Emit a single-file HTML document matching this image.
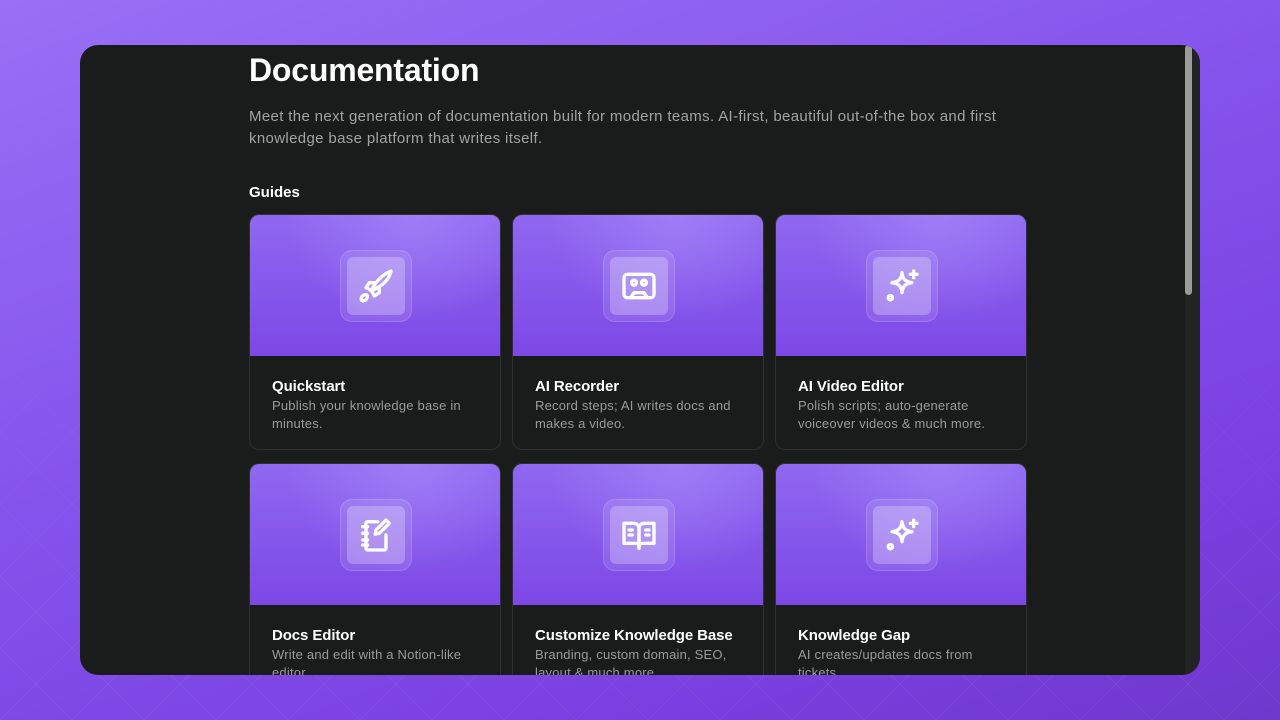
<!DOCTYPE html>
<html><head><style>
*{margin:0;padding:0;box-sizing:border-box}
body{width:1280px;height:720px;overflow:hidden;font-family:"Liberation Sans",sans-serif;background:linear-gradient(160deg,#9a70f5 0%,#8452ec 45%,#7a3fe0 80%,#6e38cc 100%);position:relative}
.pat{position:absolute;inset:0;background-image:linear-gradient(45deg,transparent 49%,rgba(255,255,255,.06) 50%,transparent 51%),linear-gradient(-45deg,transparent 49%,rgba(255,255,255,.06) 50%,transparent 51%);background-size:72px 72px;-webkit-mask-image:linear-gradient(180deg,transparent 40%,#000 85%)}
.win{position:absolute;left:80px;top:45px;width:1120px;height:630px;background:#1a1c1c;border-radius:18px;overflow:hidden}
.sb{position:absolute;right:8px;top:0;width:7px;height:250px;background:#9a9a9a;border-radius:4px}
.sbt{position:absolute;right:0;top:0;width:15px;height:100%;background:#222424}
h1{position:absolute;left:169px;top:7px;font-size:32px;color:#fff;font-weight:700;letter-spacing:-.2px}
.p{position:absolute;left:169px;top:61px;width:790px;font-size:15px;line-height:22px;color:#a3a3a3;letter-spacing:.35px}
.g{position:absolute;left:169px;top:139px;font-size:15px;color:#fff;font-weight:700}
.card{position:absolute;width:252px;height:236px;border:1px solid #2e3030;border-radius:10px;overflow:hidden;background:#1a1c1c}
.hd{height:141px;background:radial-gradient(ellipse at 65% 0%,rgba(170,140,250,.6) 0%,transparent 55%),linear-gradient(180deg,#8f68f0,#7d48e6);position:relative}
.o{position:absolute;left:90px;top:35px;width:72px;height:72px;border-radius:12px;background:rgba(255,255,255,.1);border:1px solid rgba(255,255,255,.15)}
.i{position:absolute;left:6px;top:6px;width:58px;height:58px;border-radius:6px;background:rgba(255,255,255,.25);display:flex;align-items:center;justify-content:center}
.t{position:absolute;left:22px;top:163px;font-size:15px;color:#fff;font-weight:700;letter-spacing:-.1px}
.d{position:absolute;left:22px;top:182px;width:215px;font-size:13px;line-height:18px;color:#9a9a9a;letter-spacing:.2px}
svg{width:40px;height:40px;fill:none;stroke:#fff;stroke-width:2;stroke-linecap:round;stroke-linejoin:round}
</style></head><body>
<div class="pat"></div>
<div class="win">
<h1>Documentation</h1>
<div class="p">Meet the next generation of documentation built for modern teams. AI-first, beautiful out-of-the box and first knowledge base platform that writes itself.</div>
<div class="g">Guides</div>

<div class="card" style="left:169px;top:169px"><div class="hd"><div class="o"><div class="i"><svg viewBox="0 0 24 24"><path d="M9 15c3-6 7-10 12-12-1 5-5 9-12 12z"/><path d="M8 14l-2-1 2-3 3 0"/><path d="M10 16l1 2 3-2 0-3"/><ellipse cx="5" cy="19" rx="1.5" ry="2.2" transform="rotate(45 5 19)"/></svg></div></div></div><div class="t">Quickstart</div><div class="d">Publish your knowledge base in minutes.</div></div>

<div class="card" style="left:432px;top:169px"><div class="hd"><div class="o"><div class="i"><svg viewBox="0 0 24 24"><rect x="3" y="5" width="18" height="14" rx="2"/><circle cx="9" cy="10" r="1.5"/><circle cx="15" cy="10" r="1.5"/><path d="M7 19l2-3h6l2 3"/></svg></div></div></div><div class="t">AI Recorder</div><div class="d">Record steps; AI writes docs and makes a video.</div></div>

<div class="card" style="left:695px;top:169px"><div class="hd"><div class="o"><div class="i"><svg viewBox="0 0 24 24"><path d="M12 4c.5 4 2 5.5 6 6-4 .5-5.5 2-6 6-.5-4-2-5.5-6-6 4-.5 5.5-2 6-6z"/><path d="M19 3v4M17 5h4"/><circle cx="5" cy="19" r="1.3"/></svg></div></div></div><div class="t">AI Video Editor</div><div class="d">Polish scripts; auto-generate voiceover videos &amp; much more.</div></div>

<div class="card" style="left:169px;top:418px"><div class="hd"><div class="o"><div class="i"><svg viewBox="0 0 24 24"><path d="M13 4H7a1 1 0 0 0-1 1v15a1 1 0 0 0 1 1h10a1 1 0 0 0 1-1v-8"/><path d="M4 7h3M4 11h3M4 15h3M4 18h3"/><path d="M18 3l2 2-6 6-2.5.5.5-2.5z"/></svg></div></div></div><div class="t">Docs Editor</div><div class="d">Write and edit with a Notion-like editor.</div></div>

<div class="card" style="left:432px;top:418px"><div class="hd"><div class="o"><div class="i"><svg viewBox="0 0 24 24"><path d="M3 5h6a3 3 0 0 1 3 3v11a2 2 0 0 0-2-2H3z"/><path d="M21 5h-6a3 3 0 0 0-3 3v11a2 2 0 0 1 2-2h7z"/><path d="M6 9h2M6 12h2M16 9h2M16 12h2"/><path d="M12 19v1"/></svg></div></div></div><div class="t">Customize Knowledge Base</div><div class="d">Branding, custom domain, SEO, layout &amp; much more.</div></div>

<div class="card" style="left:695px;top:418px"><div class="hd"><div class="o"><div class="i"><svg viewBox="0 0 24 24"><path d="M12 4c.5 4 2 5.5 6 6-4 .5-5.5 2-6 6-.5-4-2-5.5-6-6 4-.5 5.5-2 6-6z"/><path d="M19 3v4M17 5h4"/><circle cx="5" cy="19" r="1.3"/></svg></div></div></div><div class="t">Knowledge Gap</div><div class="d" style="width:195px">AI creates/updates docs from tickets.</div></div>

<div class="sbt"></div><div class="sb"></div>
</div>
</body></html>
